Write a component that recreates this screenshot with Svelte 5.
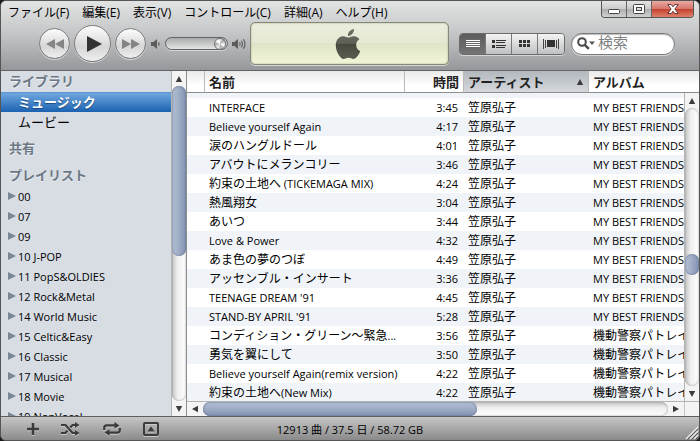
<script>
  const menus = ["ファイル(F)", "編集(E)", "表示(V)", "コントロール(C)", "詳細(A)", "ヘルプ(H)"];

  const playlists = [
    "00",
    "07",
    "09",
    "10 J-POP",
    "11 PopS&OLDIES",
    "12 Rock&Metal",
    "14 World Music",
    "15 Celtic&Easy",
    "16 Classic",
    "17 Musical",
    "18 Movie",
    "19 NonVocal",
  ];

  const best = "MY BEST FRIENDS";
  const patlabor = "機動警察パトレイバー";
  const songs = [
    ["INTERFACE", "3:45", best],
    ["Believe yourself Again", "4:17", best],
    ["涙のハングルドール", "4:01", best],
    ["アバウトにメランコリー", "3:46", best],
    ["約束の土地へ (TICKEMAGA MIX)", "4:24", best],
    ["熱風翔女", "3:04", best],
    ["あいつ", "3:44", best],
    ["Love & Power", "4:32", best],
    ["あま色の夢のつぼ", "4:49", best],
    ["アッセンブル・インサート", "3:36", best],
    ["TEENAGE DREAM '91", "4:45", best],
    ["STAND-BY APRIL '91", "5:28", best],
    ["コンディション・グリーン〜緊急...", "3:56", patlabor],
    ["勇気を翼にして", "3:50", patlabor],
    ["Believe yourself Again(remix version)", "4:22", patlabor],
    ["約束の土地へ(New Mix)", "4:22", patlabor],
  ].map(([title, time, album]) => ({ title, time, album, artist: "笠原弘子" }));

  let source = $state("ミュージック");
  let view = $state("list");
  let volume = $state(97);
  let query = $state("");

  // latin runs are set one step smaller than kana and kanji
  function runs(text) {
    return text.split(/([\x20-\x7e]+)/).filter((t) => t !== "");
  }
</script>

{#snippet mixed(text)}
  {#each runs(text) as run}{#if /^[\x20-\x7e]/.test(run)}<span class="latin">{run}</span>{:else}{run}{/if}{/each}
{/snippet}

{#snippet arrow(dir)}
  <svg width="8" height="8" viewBox="0 0 8 8" class={dir}><path d="M4 1 7.2 7H.8z" fill="#3c3c3c" /></svg>
{/snippet}

<div class="window">
  <header>
    <div class="titlebar">
      <nav>
        {#each menus as menu}
          <button class="menu">{menu}</button>
        {/each}
      </nav>
      <div class="caption">
        <button aria-label="最小化">
          <svg width="12" height="12" viewBox="0 0 12 12"><rect x=".5" y="6.5" width="11" height="4" rx="1" fill="#fff" stroke="#444" /></svg>
        </button>
        <button aria-label="最大化">
          <svg width="12" height="12" viewBox="0 0 12 12"><rect x=".5" y="1.5" width="11" height="9" rx="1" fill="#fff" stroke="#444" /><rect x="3.5" y="4.5" width="5" height="3" fill="#ddd" stroke="#444" /></svg>
        </button>
        <button class="close" aria-label="閉じる">
          <svg width="12" height="12" viewBox="0 0 12 12"><path d="M.8 1.5h3.4L6 3.8l1.8-2.3h3.4L7.9 6l3.3 4.5H7.8L6 8.2l-1.8 2.3H.8L4.1 6z" fill="#fff" stroke="#5a2c28" stroke-width=".9" /></svg>
        </button>
      </div>
    </div>

    <div class="toolbar">
      <div class="transport">
        <button class="round" aria-label="前へ">
          <svg width="18" height="10" viewBox="0 0 18 10"><path d="M9 0v10L0 5zM18 0v10L9 5z" fill="#858585" /></svg>
        </button>
        <button class="round play" aria-label="再生">
          <svg width="16" height="16" viewBox="0 0 16 16"><path d="M1 0v16l15-8z" fill="#333" /></svg>
        </button>
        <button class="round" aria-label="次へ">
          <svg width="18" height="10" viewBox="0 0 18 10"><path d="M0 0v10l9-5zM9 0v10l9-5z" fill="#858585" /></svg>
        </button>
      </div>
      <div class="volume">
        <svg width="10" height="12" viewBox="0 0 10 12"><path d="M0 4h2.5L6 1v10L2.5 8H0z" fill="#5b5b5b" /><path d="M7.5 4.3q1.3 1.7 0 3.4" fill="none" stroke="#5b5b5b" stroke-width="1.2" /></svg>
        <input type="range" min="0" max="100" aria-label="音量" bind:value={volume} />
        <svg width="14" height="12" viewBox="0 0 14 12"><path d="M0 4h2.5L6 1v10L2.5 8H0z" fill="#5b5b5b" /><path d="M7.5 4.3q1.3 1.7 0 3.4M9.3 2.7q2.4 3.3 0 6.6M11.3 1.2q3.4 4.8 0 9.6" fill="none" stroke="#5b5b5b" stroke-width="1.1" /></svg>
      </div>
      <div class="lcd">
        <svg width="30" height="30" viewBox="0 0 24 24">
          <defs>
            <linearGradient id="fruit" x1="0" y1="0" x2="0" y2="1">
              <stop offset="0" stop-color="#6d6f66" />
              <stop offset=".48" stop-color="#5e6056" />
              <stop offset=".5" stop-color="#45483c" />
              <stop offset="1" stop-color="#5a5d4e" />
            </linearGradient>
          </defs>
          <path fill="url(#fruit)" d="M12.152 6.896c-.948 0-2.415-1.078-3.96-1.04-2.04.027-3.91 1.183-4.961 3.014-2.117 3.675-.546 9.103 1.519 12.09 1.013 1.454 2.208 3.09 3.792 3.039 1.52-.065 2.09-.987 3.935-.987 1.831 0 2.35.987 3.96.948 1.637-.026 2.676-1.48 3.676-2.948 1.156-1.688 1.636-3.325 1.662-3.415-.039-.013-3.182-1.221-3.22-4.857-.026-3.04 2.48-4.494 2.597-4.559-1.429-2.09-3.623-2.324-4.39-2.376-2-.156-3.675 1.09-4.61 1.09zM15.53 3.83c.843-1.012 1.4-2.427 1.245-3.83-1.207.052-2.662.805-3.532 1.818-.78.896-1.454 2.338-1.273 3.714 1.338.104 2.715-.688 3.559-1.701" />
        </svg>
      </div>
      <div class="views">
        <button class:on={view === "list"} aria-label="リスト" onclick={() => (view = "list")}>
          <svg width="14" height="10" viewBox="0 0 14 10"><path d="M0 1.5h14M0 3.5h14M0 5.5h14M0 7.5h14" stroke="#fff" /></svg>
        </button>
        <button class:on={view === "album"} aria-label="アルバム" onclick={() => (view = "album")}>
          <svg width="14" height="10" viewBox="0 0 14 10"><path d="M0 1h3v3H0zM0 6h3v3H0z" fill="#333" /><path d="M4 1.5h10M4 3.5h9M4 6.5h10M4 8.5h9" stroke="#333" /></svg>
        </button>
        <button class:on={view === "grid"} aria-label="グリッド" onclick={() => (view = "grid")}>
          <svg width="12" height="10" viewBox="0 0 12 10"><path d="M0 1h3v3H0zM4 1h3v3H4zM8 1h3v3H8zM0 5h3v3H0zM4 5h3v3H4zM8 5h3v3H8z" fill="#333" /></svg>
        </button>
        <button class:on={view === "flow"} aria-label="カバーフロー" onclick={() => (view = "flow")}>
          <svg width="16" height="10" viewBox="0 0 16 10"><path d="M.5 0v10M2.5 1v8M13.5 1v8M15.5 0v10" stroke="#444" /><path d="M4 1h8v7H4z" fill="#333" /></svg>
        </button>
      </div>
      <label class="search">
        <svg width="18" height="13" viewBox="0 0 18 13"><circle cx="5" cy="5" r="3.8" fill="none" stroke="#4a4a4a" stroke-width="2" /><path d="m7.8 7.8 4 4" stroke="#4a4a4a" stroke-width="2.4" /><path d="M12 4.5h6l-3 3.6z" fill="#555" /></svg>
        <input type="text" placeholder="検索" aria-label="検索" bind:value={query} />
      </label>
    </div>
  </header>

  <main>
    <aside>
      <div class="sources">
        <h2>ライブラリ</h2>
        {#each ["ミュージック", "ムービー"] as item}
          <button class="library" class:selected={source === item} onclick={() => (source = item)}>{item}</button>
        {/each}
        <h2 class="spaced">共有</h2>
        <h2 class="spaced">プレイリスト</h2>
        {#each playlists as item}
          <button class="playlist" onclick={() => (source = item)}>
            <svg width="8" height="8" viewBox="0 0 8 8"><path d="M0 0v8l8-4z" fill="#7b8794" /></svg>
            {item}
          </button>
        {/each}
      </div>
      <div class="vscroll">
        <button aria-label="上へ">{@render arrow("up")}</button>
        <div class="track"><div class="thumb side"></div></div>
        <button aria-label="下へ">{@render arrow("down")}</button>
      </div>
    </aside>

    <section>
      <div class="list">
        <table>
          <colgroup>
            <col class="c-num" />
            <col class="c-name" />
            <col class="c-time" />
            <col class="c-artist" />
            <col />
          </colgroup>
          <thead>
            <tr>
              <th></th>
              <th>名前</th>
              <th class="time">時間</th>
              <th class="sorted">
                <span>アーティスト {@render arrow("up")}</span>
              </th>
              <th>アルバム</th>
            </tr>
          </thead>
          <tbody>
            <tr class="cut"><td colspan="5"></td></tr>
            {#each songs as song}
              <tr>
                <td></td>
                <td>{@render mixed(song.title)}</td>
                <td class="time">{@render mixed(song.time)}</td>
                <td>{@render mixed(song.artist)}</td>
                <td>{@render mixed(song.album)}</td>
              </tr>
            {/each}
          </tbody>
        </table>
        <div class="vscroll over">
          <button aria-label="上へ">{@render arrow("up")}</button>
          <div class="track"><div class="thumb songs"></div></div>
          <button aria-label="下へ">{@render arrow("down")}</button>
        </div>
      </div>
      <div class="hscroll">
        <button aria-label="左へ">{@render arrow("left")}</button>
        <div class="htrack"><div class="hthumb"></div></div>
        <button aria-label="右へ">{@render arrow("right")}</button>
        <div class="corner"></div>
      </div>
    </section>
  </main>

  <footer>
    <div class="actions">
      <button aria-label="プレイリストを追加">
        <svg width="14" height="14" viewBox="0 0 14 14"><path d="M7 1v12M1 7h12" stroke="#3c3c3c" stroke-width="2.6" /></svg>
      </button>
      <button aria-label="シャッフル">
        <svg width="20" height="14" viewBox="0 0 20 14"><path d="M0 3h4.5l7 8H15M0 11h4.5l2-2.4M9.3 5.4 11.5 3H15" fill="none" stroke="#3c3c3c" stroke-width="2.2" /><path d="M14 0v6l4.5-3zM14 8v6l4.5-3z" fill="#3c3c3c" /></svg>
      </button>
      <button aria-label="リピート">
        <svg width="20" height="14" viewBox="0 0 20 14"><path d="M2.2 8V6q0-2.6 2.6-2.6H13M17.8 6v2q0 2.6-2.6 2.6H7" fill="none" stroke="#3c3c3c" stroke-width="2.2" /><path d="M12.5 0v6.800l5-3.400zM7.500 7.200V14l-5-3.400z" fill="#3c3c3c" /></svg>
      </button>
      <button aria-label="アートワークを表示">
        <svg width="16" height="14" viewBox="0 0 16 14"><rect x="1" y="1" width="14" height="12" rx="1" fill="none" stroke="#3c3c3c" stroke-width="2" /><path d="M8 4.2l3.500 5.300h-7z" fill="#3c3c3c" /></svg>
      </button>
    </div>
    <p>12913 曲 / 37.5 日 / 58.72 GB</p>
    <svg class="grip" width="14" height="14" viewBox="0 0 14 14"><path d="M1 13 13 1M5 13l8-8M9 13l4-4" stroke="#e6e6e6" stroke-width="1.5" /><path d="m2.5 13.5 11-11M6.5 13.5l7-7M10.5 13.5l3-3" stroke="#555" /></svg>
  </footer>
</div>

<style>
  :global(body) {
    background: #1a1a1a;
  }
  .window {
    display: flex;
    flex-direction: column;
    height: 100vh;
    box-sizing: border-box;
    border: 1px solid #555;
    border-radius: 6px;
    overflow: hidden;
    background: #8f8f8f;
    color: #000;
    font-family: "Open Sans", "Noto Sans CJK JP", sans-serif;
    font-size: 12px;
  }
  button {
    display: flex;
    align-items: center;
    justify-content: center;
    padding: 0;
    border: none;
    background: none;
    color: inherit;
    font: inherit;
  }
  svg {
    display: block;
    flex: none;
  }
  .latin {
    font-size: 11px;
  }

  /* header */
  header {
    height: 69px;
    flex: none;
    border-bottom: 1px solid #626568;
    background: linear-gradient(#e2e3e3, #c6c7c8 45%, #95989b);
  }
  .titlebar {
    display: flex;
    justify-content: space-between;
    height: 21px;
    padding: 0 5px 0 7px;
  }
  nav {
    display: flex;
    gap: 13px;
  }
  .menu {
    white-space: nowrap;
  }
  .caption {
    display: flex;
    height: 17px;
    box-sizing: border-box;
    border: 1px solid #555;
    border-top: none;
    border-radius: 0 0 4px 4px;
    overflow: hidden;
  }
  .caption button {
    width: 25px;
    border-right: 1px solid #666;
    background: linear-gradient(#e4e4e4, #c9c9c9 50%, #adadad 50%, #d0d0d0);
  }
  .caption .close {
    width: 41px;
    border-right: none;
    background: linear-gradient(#e7aaa2, #d87468 50%, #c23f2f 50%, #e08068);
  }
  .toolbar {
    display: flex;
    align-items: center;
    height: 43px;
    padding: 0 24px 0 38px;
  }
  .transport {
    display: flex;
    align-items: center;
    gap: 4px;
  }
  .round {
    width: 31px;
    height: 31px;
    border: 1px solid #7b7d7f;
    border-radius: 50%;
    background: linear-gradient(#fdfdfd, #d6d6d6 60%, #efefef);
    box-shadow: 0 1px 0 #d5d6d7;
  }
  .round.play {
    width: 37px;
    height: 37px;
    padding-left: 3px;
  }
  .volume {
    display: flex;
    align-items: center;
    gap: 4px;
    margin: 0 4px 0 5px;
  }
  .volume input {
    appearance: none;
    width: 63px;
    height: 13px;
    box-sizing: border-box;
    margin: 0;
    border: 1px solid #606264;
    border-radius: 7px;
    background: linear-gradient(#a9abad, #e4e4e4);
    box-shadow: 0 1px 0 #d5d6d7;
  }
  .volume input::-webkit-slider-thumb {
    appearance: none;
    width: 12px;
    height: 12px;
    box-sizing: border-box;
    border: 1px solid #707070;
    border-radius: 50%;
    background: conic-gradient(#eee, #aaa 12%, #fff 28%, #aaa 45%, #eee 60%, #aaa 75%, #fff 88%, #eee);
  }
  .lcd {
    display: flex;
    align-items: center;
    justify-content: center;
    flex: 1;
    height: 43px;
    box-sizing: border-box;
    border: 1px solid #858874;
    border-radius: 5px;
    background: linear-gradient(#ebeedd, #e5e8d2 48%, #dfe3c6 48%, #f2f5d8);
    box-shadow: inset 0 0 2px #a2a58c, 0 1px 0 #d5d6d7;
  }
  .lcd svg {
    margin-right: 4px;
  }
  .views {
    display: flex;
    height: 22px;
    box-sizing: border-box;
    margin: 0 6px 0 10px;
    border: 1px solid #6a6c6e;
    border-radius: 4px;
    overflow: hidden;
    box-shadow: 0 1px 0 #d5d6d7;
  }
  .views button {
    width: 26px;
    border-right: 1px solid #77797b;
    background: linear-gradient(#f4f4f4, #bfc0c1);
  }
  .views button:last-child {
    border-right: none;
  }
  .views .on {
    background: linear-gradient(#5c5c5c, #747474);
  }
  .search {
    display: flex;
    align-items: center;
    gap: 3px;
    width: 104px;
    height: 22px;
    box-sizing: border-box;
    padding: 0 5px;
    border: 1px solid #77797b;
    border-radius: 11px;
    background: #fff;
    box-shadow: inset 0 1px 1px #bbb, 0 1px 0 #d5d6d7;
  }
  .search input {
    min-width: 0;
    flex: 1;
    height: 20px;
    padding: 0 0 3px;
    box-sizing: border-box;
    border: none;
    outline: none;
    background: none;
    font: inherit;
    font-size: 15px;
  }
  .search input::placeholder {
    color: #808080;
  }

  /* source list */
  main {
    display: flex;
    flex: 1;
    min-height: 0;
  }
  aside {
    display: flex;
    width: 185px;
    flex: none;
    border-right: 1px solid #8d8d8d;
    background: #d8dde4;
  }
  .sources {
    flex: 1;
    overflow: hidden;
  }
  h2 {
    margin: 0;
    padding-left: 8px;
    color: #6b7784;
    font-size: 13px;
    font-weight: 700;
    line-height: 21px;
    text-shadow: 0 1px 0 #f0f3f6;
  }
  .spaced {
    margin-top: 6px;
  }
  .library,
  .playlist {
    width: 100%;
    height: 20px;
    justify-content: flex-start;
    white-space: nowrap;
  }
  .library {
    padding-left: 17px;
    padding-bottom: 2px;
    font-size: 13px;
  }
  .selected {
    background: linear-gradient(#4e8fd3, #6ea5dd 8%, #1b62b1);
    color: #fff;
    font-weight: 700;
    text-shadow: 0 1px 1px #1a4a80;
  }
  .playlist {
    gap: 2px;
    padding-left: 7px;
    font-size: 11px;
  }

  /* scroll bars */
  .vscroll {
    display: flex;
    flex-direction: column;
    width: 15px;
    box-sizing: border-box;
    border-left: 1px solid #b4b4b4;
    background: #f4f4f4;
  }
  .vscroll button {
    width: 100%;
    height: 15px;
  }
  .track {
    flex: 1;
    display: flex;
    flex-direction: column;
    border-radius: 7px;
    background: linear-gradient(90deg, #c4c4c4, #efefef 40%, #fff);
    box-shadow: inset 0 0 2px #888;
  }
  .thumb {
    border-radius: 7px;
    box-shadow: inset 0 0 2px #4f6387;
    background: linear-gradient(90deg, #b2bdd1, #a3b0c8 40%, #8292b0);
  }
  .thumb.side {
    height: 54%;
  }
  .thumb.songs {
    height: 21px;
    margin-top: 146px;
  }
  .over {
    position: absolute;
    top: 22px;
    right: 0;
    bottom: 0;
  }
  .down {
    transform: rotate(180deg);
  }
  .left {
    transform: rotate(-90deg);
  }
  .right {
    transform: rotate(90deg);
  }
  .hscroll {
    display: flex;
    height: 14px;
    flex: none;
    border-top: 1px solid #b4b4b4;
    background: #f4f4f4;
  }
  .hscroll button {
    width: 16px;
  }
  .htrack {
    flex: 1;
    display: flex;
    border-radius: 7px;
    background: linear-gradient(#c4c4c4, #efefef 40%, #fff);
    box-shadow: inset 0 0 2px #888;
  }
  .hthumb {
    width: 59%;
    border-radius: 7px;
    background: linear-gradient(#b2bdd1, #a3b0c8 40%, #8292b0);
    box-shadow: inset 0 0 2px #4f6387;
  }
  .corner {
    width: 14px;
    border-left: 1px solid #c4c4c4;
  }

  /* song list */
  section {
    display: flex;
    flex-direction: column;
    flex: 1;
    min-width: 0;
    background: #fff;
  }
  .list {
    position: relative;
    flex: 1;
    min-height: 0;
    overflow: hidden;
  }
  table {
    width: 100%;
    table-layout: fixed;
    border-collapse: separate;
    border-spacing: 0;
  }
  .c-num {
    width: 17px;
  }
  .c-name {
    width: 200px;
  }
  .c-time {
    width: 59px;
  }
  .c-artist {
    width: 125px;
  }
  th,
  td {
    padding: 0 5px;
    overflow: hidden;
    text-align: left;
    white-space: nowrap;
  }
  th {
    height: 21px;
    padding: 0 4px;
    border-bottom: 1px solid #8d8d8d;
    border-left: 1px solid #b9b9b9;
    background: linear-gradient(#e9e9e9, #fff 70%);
    color: #222;
    font-size: 13px;
    font-weight: 700;
    line-height: 20px;
  }
  th:first-child {
    border-left: none;
  }
  .sorted {
    background: linear-gradient(#b3b8be, #d5d9de);
  }
  .sorted span {
    display: flex;
    align-items: center;
    justify-content: space-between;
  }
  td {
    height: 19px;
    line-height: 19px;
  }
  .time {
    text-align: right;
  }
  tbody tr:nth-child(odd) {
    background: #f0f4f9;
  }
  .cut td {
    height: 5px;
    line-height: 5px;
  }

  /* status bar */
  footer {
    display: grid;
    grid-template-columns: 1fr auto 1fr;
    align-items: center;
    height: 23px;
    flex: none;
    border-top: 1px solid #5d5d5d;
    background: linear-gradient(#c6c6c6, #8a8a8a);
  }
  .actions {
    display: flex;
    gap: 21px;
    padding-left: 25px;
  }
  .actions svg {
    filter: drop-shadow(0 1px 0 #c8c8c8);
  }
  p {
    margin: 0;
    font-size: 11px;
  }
  .grip {
    align-self: end;
    justify-self: end;
  }
</style>
